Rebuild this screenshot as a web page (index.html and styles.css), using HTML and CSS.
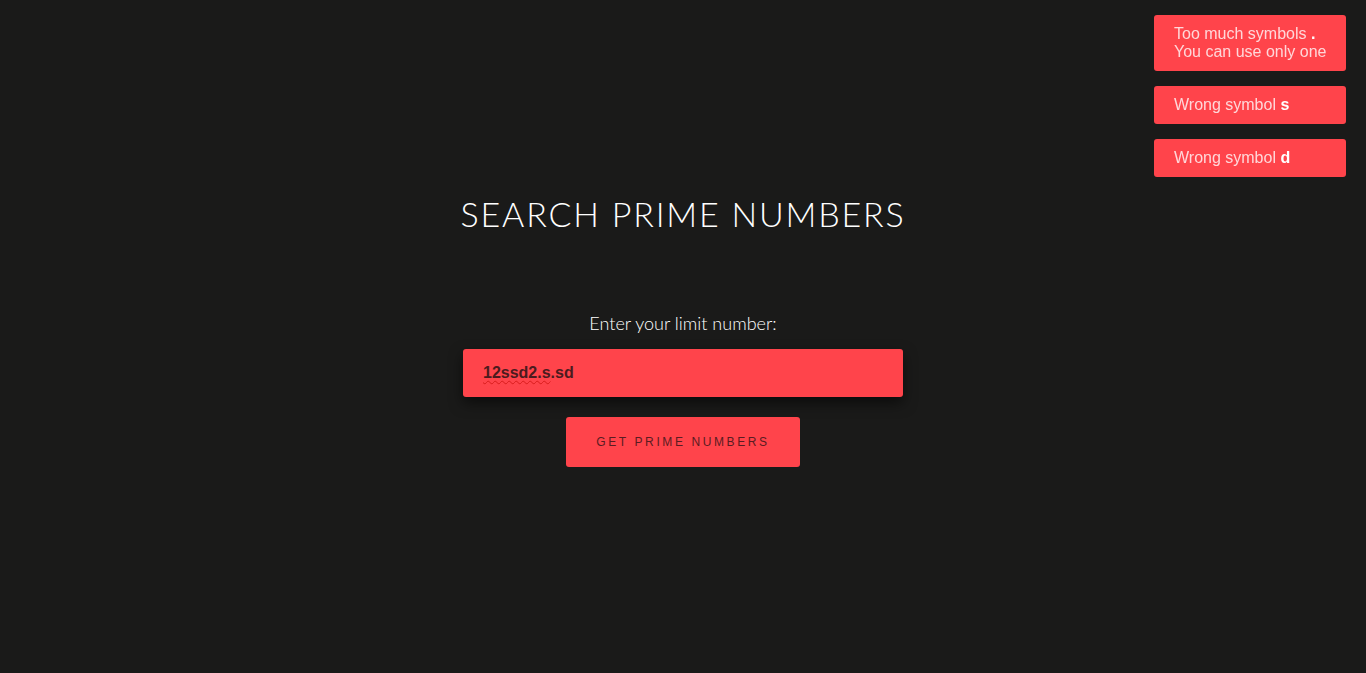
FILE: index.html
```html
<!DOCTYPE html>
<html lang="en">
<head>
<meta charset="utf-8">
<title>Search prime numbers</title>
<link rel="stylesheet" href="styles.css">
</head>
<body>
<main class="page">
  <h1 class="title">SEARCH PRIME NUMBERS</h1>
  <form class="search">
    <label class="label">Enter your limit number:</label>
    <div class="field"><span class="misspelled">12ssd2.s</span>.sd</div>
    <button type="button" class="submit">GET PRIME NUMBERS</button>
  </form>
</main>
<div class="toasts">
  <div class="toast">Too much symbols <b>.</b><br>You can use only one</div>
  <div class="toast">Wrong symbol <b>s</b></div>
  <div class="toast">Wrong symbol <b>d</b></div>
</div>
</body>
</html>
```
FILE: styles.css
```css
html, body {
  margin: 0;
  padding: 0;
  background: #1a1a19;
  height: 100%;
}
body {
  font-family: "Liberation Sans", Arial, sans-serif;
}
.page {
  display: flex;
  flex-direction: column;
  align-items: center;
  padding-top: 192px;
}
.title {
  margin: 0;
  font-family: Lato, "Open Sans", sans-serif;
  font-weight: 300;
  font-size: 34px;
  line-height: 44px;
  letter-spacing: 1.8px;
  color: #ffffff;
}
.search {
  display: flex;
  flex-direction: column;
  align-items: center;
  margin-top: 75px;
}
.label {
  font-family: Lato, "Open Sans", sans-serif;
  font-weight: 300;
  font-size: 18px;
  line-height: 24px;
  color: #ffffff;
}
.field {
  box-sizing: border-box;
  width: 440px;
  height: 48px;
  margin-top: 14px;
  padding: 0 20px;
  display: flex;
  align-items: center;
  background: #ff444b;
  border-radius: 3px;
  box-shadow: 0 6px 14px rgba(0, 0, 0, 0.55);
  font-weight: bold;
  font-size: 16px;
  color: #4b1b1e;
}
.misspelled {
  text-decoration: underline wavy #d81b1b;
  text-decoration-thickness: 1px;
  text-underline-offset: 2px;
}
.submit {
  margin-top: 20px;
  width: 234px;
  height: 50px;
  border: none;
  border-radius: 3px;
  background: #ff444b;
  font-family: "Liberation Sans", Arial, sans-serif;
  font-size: 12px;
  letter-spacing: 2.6px;
  color: #5a1c22;
  cursor: pointer;
}
.toasts {
  position: fixed;
  top: 15px;
  right: 20px;
  display: flex;
  flex-direction: column;
  gap: 15px;
}
.toast {
  box-sizing: border-box;
  width: 192px;
  padding: 10px 20px;
  background: #ff444b;
  border-radius: 3px;
  font-size: 16px;
  line-height: 18px;
  white-space: nowrap;
  color: #ffd7d9;
}
.toast b {
  color: #ffffff;
}
```
